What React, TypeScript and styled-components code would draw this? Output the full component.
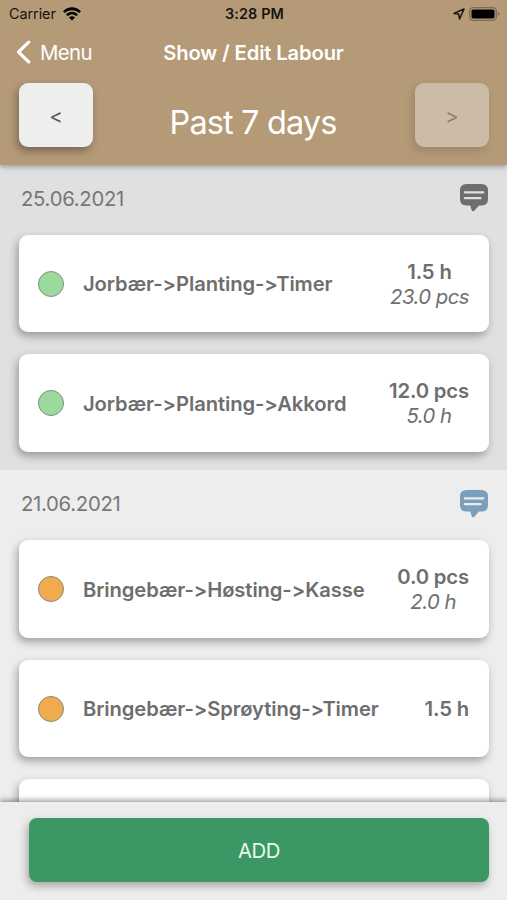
import React from "react";
import styled, { createGlobalStyle } from "styled-components";

const GlobalStyle = createGlobalStyle`
  * { box-sizing: border-box; }
  body {
    margin: 0;
    font-family: Inter, "Liberation Sans", sans-serif;
    font-feature-settings: "calt" 0;
    color: #6e6e6e;
  }
  button { font: inherit; border: 0; padding: 0; }
`;

const Screen = styled.div`
  display: flex;
  flex-direction: column;
  width: 507px;
  height: 900px;
  overflow: hidden;
  background: #ededed;
`;

const Header = styled.header`
  flex: none;
  height: 165px;
  background: #b59a78;
  box-shadow: 0 2px 5px rgba(0, 0, 0, 0.3);
  z-index: 1;
`;

const StatusBar = styled.div`
  display: grid;
  grid-template-columns: 1fr auto 1fr;
  align-items: center;
  height: 27px;
  padding: 0 7px 0 9px;
  font-size: 14.4px;
  color: #17130f;
`;

const Carrier = styled.div`
  display: flex;
  align-items: center;
  gap: 7px;
  letter-spacing: -0.05px;
`;

const Clock = styled.div`
  font-weight: 600;
  letter-spacing: 0.12px;
`;

const StatusIcons = styled.div`
  display: flex;
  align-items: center;
  justify-content: flex-end;
  gap: 4px;
`;

const NavBar = styled.nav`
  display: grid;
  grid-template-columns: 1fr auto 1fr;
  align-items: center;
  height: 50px;
  padding: 0 16px;
  color: #fff;
`;

const BackLink = styled.div`
  display: flex;
  align-items: center;
  gap: 9px;
  font-size: 20.4px;
  letter-spacing: -0.65px;
`;

const Title = styled.h1`
  margin: 0;
  font-size: 20.2px;
  font-weight: 600;
  letter-spacing: -0.13px;
`;

const PeriodBar = styled.div`
  display: flex;
  justify-content: space-between;
  padding: 6px 18px 0 19px;
`;

const StepButton = styled.button`
  width: 74px;
  height: 64px;
  padding-top: 2px;
  border-radius: 9px;
  background: #eee;
  box-shadow: -2px 4px 8px rgba(0, 0, 0, 0.34);
  font-size: 20.5px;
  color: #555;
  &:disabled { opacity: 0.4; }
`;

const Period = styled.div`
  padding: 20px 2px 0 0;
  line-height: 40px;
  font-size: 32.5px;
  letter-spacing: -0.87px;
  color: #fff;
`;

const DayList = styled.main`
  flex: 1;
  min-height: 0;
  overflow: hidden;
`;

const Day = styled.section<{ $shaded?: boolean }>`
  display: flex;
  flex-direction: column;
  gap: 22px;
  padding: 0 18px 18.5px 19px;
  background: ${(p) => (p.$shaded ? "#e0e0e0" : "#ededed")};
`;

const DayHeader = styled.div`
  display: flex;
  align-items: center;
  justify-content: space-between;
  height: 47.9px;
  padding: 18.4px 1px 0 2px;
  font-size: 20.3px;
  letter-spacing: -0.28px;
  color: #777;
`;

const Card = styled.article`
  display: flex;
  align-items: center;
  height: 97.5px;
  padding: 0 20px 0 19px;
  border-radius: 9px;
  background: #fff;
  box-shadow: -2px 4px 8px rgba(0, 0, 0, 0.32);
`;

const Dot = styled.span<{ $color: string }>`
  width: 26px;
  height: 26px;
  border: 1.5px solid #888;
  border-radius: 50%;
  background: ${(p) => p.$color};
`;

const Task = styled.div`
  flex: 1;
  padding: 0.5px 0 0 19px;
  font-size: 20.2px;
  font-weight: 570;
  letter-spacing: -0.09px;
  white-space: nowrap;
`;

const Amounts = styled.div`
  padding-top: 0.6px;
  text-align: center;
  font-size: 20.3px;
  line-height: 25px;
  white-space: nowrap;
`;

const Primary = styled.div`
  font-weight: 570;
  letter-spacing: -0.15px;
`;

const Secondary = styled.div`
  font-style: italic;
  letter-spacing: -0.5px;
`;

const Footer = styled.footer`
  flex: none;
  height: 98px;
  padding: 16px 18px 0 29px;
  background: #ededed;
  box-shadow: 0 -2px 5px rgba(0, 0, 0, 0.38);
  z-index: 1;
`;

const AddButton = styled.button`
  width: 100%;
  height: 64px;
  border-radius: 8px;
  background: #3b9864;
  box-shadow: -2px 4px 8px rgba(0, 0, 0, 0.3);
  font-size: 20.3px;
  letter-spacing: -0.45px;
  color: #e6fbe9;
`;

const WifiIcon = () => (
  <svg width="18" height="14" viewBox="0 0 18 14" fill="#000">
    <path d="M0 4.2C5-1.2 13-1.2 18 4.2L16.2 6.1C12.2 2.3 5.800 2.3 1.800 6.100Z" />
    <path d="M3 7.300C6.400 3.800 11.600 3.800 15 7.300L13.200 9.200C10.800 7 7.200 7 4.800 9.200Z" />
    <path d="M6 10.400C7.700 8.800 10.300 8.800 12 10.400L9 13.500Z" />
  </svg>
);

const LocationIcon = () => (
  <svg width="12" height="12" viewBox="0 0 12 12" fill="none" stroke="currentColor" strokeWidth="1.5" strokeLinejoin="round">
    <path d="M11 1L1 5.400L5.700 6.100L6.600 11Z" />
  </svg>
);

const BatteryIcon = () => (
  <svg width="31" height="14" viewBox="0 0 31 14">
    <rect x="0.700" y="0.700" width="26.600" height="12.600" rx="3.600" fill="none" stroke="#7d6b54" strokeWidth="1.300" />
    <rect x="2.500" y="2.500" width="23" height="9" rx="1.800" fill="#000" />
    <path d="M28.700 4.700Q30.500 5.500 30.500 7T28.700 9.300Z" fill="#7d6b54" />
  </svg>
);

const BackIcon = () => (
  <svg width="15" height="24" viewBox="0 0 15 24" fill="none" stroke="currentColor" strokeWidth="3.200" strokeLinecap="round" strokeLinejoin="round">
    <path d="M12.700 2.200L2.500 12L12.700 21.800" />
  </svg>
);

const CommentIcon = ({ color, line }: { color: string; line: string }) => (
  <svg width="28" height="28" viewBox="0 0 28 28">
    <path
      d="M6.500 0H21.500Q28 0 28 6.500V15Q28 21.500 21.500 21.500H19L14.300 26.700Q12.300 28.300 11.600 26L10.300 21.500H6.500Q0 21.500 0 15V6.500Q0 0 6.500 0Z"
      fill={color}
    />
    <path d="M4.800 8.300H23.300M4.800 14.200H20.500" stroke={line} strokeWidth="2.200" strokeLinecap="round" />
  </svg>
);

type Entry = { task: string; primary: string; secondary?: string };

const GREEN = "#9adb9d";
const ORANGE = "#efac4c";

const june25: Entry[] = [
  { task: "Jorbær->Planting->Timer", primary: "1.5 h", secondary: "23.0 pcs" },
  { task: "Jorbær->Planting->Akkord", primary: "12.0 pcs", secondary: "5.0 h" },
];

const june21: Entry[] = [
  { task: "Bringebær->Høsting->Kasse", primary: "0.0 pcs", secondary: "2.0 h" },
  { task: "Bringebær->Sprøyting->Timer", primary: "1.5 h" },
];

const EntryCard = ({ entry, color }: { entry: Entry; color: string }) => (
  <Card>
    <Dot $color={color} />
    <Task>{entry.task}</Task>
    <Amounts>
      <Primary>{entry.primary}</Primary>
      {entry.secondary && <Secondary>{entry.secondary}</Secondary>}
    </Amounts>
  </Card>
);

export default function App() {
  return (
    <>
      <GlobalStyle />
      <Screen>
        <Header>
          <StatusBar>
            <Carrier>
              Carrier
              <WifiIcon />
            </Carrier>
            <Clock>3:28 PM</Clock>
            <StatusIcons>
              <LocationIcon />
              <BatteryIcon />
            </StatusIcons>
          </StatusBar>
          <NavBar>
            <BackLink>
              <BackIcon />
              Menu
            </BackLink>
            <Title>Show / Edit Labour</Title>
          </NavBar>
          <PeriodBar>
            <StepButton>&lt;</StepButton>
            <Period>Past 7 days</Period>
            <StepButton disabled>&gt;</StepButton>
          </PeriodBar>
        </Header>
        <DayList>
          <Day $shaded>
            <DayHeader>
              25.06.2021
              <CommentIcon color="#6e6e6e" line="#e0e0e0" />
            </DayHeader>
            {june25.map((e) => (
              <EntryCard key={e.task} entry={e} color={GREEN} />
            ))}
          </Day>
          <Day>
            <DayHeader>
              21.06.2021
              <CommentIcon color="#7b9fba" line="#ededed" />
            </DayHeader>
            {june21.map((e) => (
              <EntryCard key={e.task} entry={e} color={ORANGE} />
            ))}
            <Card />
          </Day>
        </DayList>
        <Footer>
          <AddButton>ADD</AddButton>
        </Footer>
      </Screen>
    </>
  );
}
